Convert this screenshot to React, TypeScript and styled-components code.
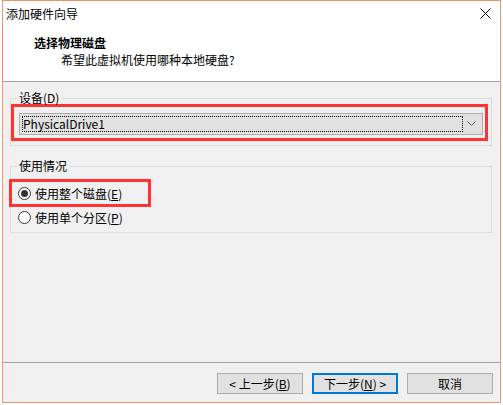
import React from 'react'
import styled, { createGlobalStyle } from 'styled-components'

const GlobalStyle = createGlobalStyle`
  html, body {
    margin: 0;
    padding: 0;
    background: #fff;
  }
  body {
    font-family: "Noto Sans CJK SC", "Microsoft YaHei", sans-serif;
    font-size: 12px;
    color: #000;
  }
`

const Window = styled.div`
  box-sizing: border-box;
  width: 499px;
  height: 403px;
  margin-left: 2px;
  border: 1px solid #f0956a;
  display: flex;
  flex-direction: column;
  background: #f0f0f0;
`

const TitleBar = styled.div`
  height: 25px;
  flex-shrink: 0;
  background: #fff;
  display: flex;
  align-items: center;
  justify-content: space-between;
  padding: 0 9px 0 3px;
`

const TitleText = styled.span`
  line-height: 17px;
`

const Header = styled.div`
  height: 55px;
  flex-shrink: 0;
  background: #fff;
  border-bottom: 1px solid #a0a0a0;
`

const HeaderTitle = styled.div`
  font-weight: bold;
  line-height: 17px;
  padding: 8px 0 0 31px;
`

const HeaderSub = styled.div`
  line-height: 17px;
  padding-left: 58px;
`

const Body = styled.div`
  flex: 1;
  padding: 10px 8px 0 7px;
`

const Group = styled.fieldset<{ $gap?: number }>`
  margin: ${p => p.$gap ?? 0}px 0 0 0;
  min-width: 0;
  border: 1px solid #dcdcdc;
  padding: 0 3px ${p => (p.$gap ? 5 : 4)}px 0;
`

const Legend = styled.legend`
  margin-left: 6px;
  padding: 0 2px;
  line-height: 12px;
`

const Highlight = styled.div<{ $pad: string; $offset?: number; $top?: number; $width?: number }>`
  box-sizing: border-box;
  border: 3px solid #f33;
  padding: ${p => p.$pad};
  margin: ${p => p.$top ?? 0}px 0 0 ${p => p.$offset ?? 0}px;
  width: ${p => (p.$width ? `${p.$width}px` : 'auto')};
`

const Combo = styled.div`
  box-sizing: border-box;
  height: 22px;
  border: 1px solid #adadad;
  background: #e1e1e1;
  display: flex;
  padding: 2px;
`

const ComboText = styled.div`
  flex: 1;
  display: flex;
  align-items: center;
  border: 1px dotted #000;
  line-height: 14px;
`

const ComboArrow = styled.div`
  width: 17px;
  display: flex;
  align-items: center;
  justify-content: center;
`

const RadioRow = styled.label<{ $indent?: number; $height: number }>`
  display: flex;
  align-items: center;
  gap: 4px;
  height: ${p => p.$height}px;
  padding-left: ${p => p.$indent ?? 0}px;
`

const Radio = styled.span<{ $checked?: boolean }>`
  box-sizing: border-box;
  width: 13px;
  height: 13px;
  border: 1px solid #333;
  border-radius: 50%;
  background: #fff;
  display: flex;
  align-items: center;
  justify-content: center;

  &::after {
    content: '';
    width: 7px;
    height: 7px;
    border-radius: 50%;
    background: #333;
    display: ${p => (p.$checked ? 'block' : 'none')};
  }
`

const Key = styled.span`
  text-decoration: underline;
`

const Footer = styled.div`
  box-sizing: border-box;
  height: 40px;
  flex-shrink: 0;
  border-top: 1px solid #a0a0a0;
  display: flex;
  justify-content: flex-end;
  gap: 9px;
  padding: 10px 7px 0 0;
`

const Button = styled.button<{ $default?: boolean }>`
  box-sizing: border-box;
  width: 86px;
  height: 21px;
  margin: 0;
  padding: 0;
  font: inherit;
  line-height: 17px;
  color: #000;
  background: #e1e1e1;
  border: ${p => (p.$default ? '2px solid #0078d7' : '1px solid #adadad')};
`

const CloseIcon = () => (
  <svg width="11" height="11" viewBox="0 0 11 11">
    <path d="M0.5 0.5 L10.5 10.5 M10.5 0.5 L0.5 10.5" stroke="#000" strokeWidth="1" />
  </svg>
)

const Chevron = () => (
  <svg width="9" height="6" viewBox="0 0 9 6">
    <polyline points="0.5,0.5 4.5,4.5 8.5,0.5" fill="none" stroke="#555" strokeWidth="1" />
  </svg>
)

export default function App() {
  return (
    <>
      <GlobalStyle />
      <Window>
        <TitleBar>
          <TitleText>添加硬件向导</TitleText>
          <CloseIcon />
        </TitleBar>
        <Header>
          <HeaderTitle>选择物理磁盘</HeaderTitle>
          <HeaderSub>希望此虚拟机使用哪种本地硬盘?</HeaderSub>
        </Header>
        <Body>
          <Group>
            <Legend>设备(D)</Legend>
            <Highlight $pad="6px 2px 3px 5px">
              <Combo>
                <ComboText>PhysicalDrive1</ComboText>
                <ComboArrow>
                  <Chevron />
                </ComboArrow>
              </Combo>
            </Highlight>
          </Group>
          <Group $gap={14}>
            <Legend>使用情况</Legend>
            <Highlight $pad="0 0 0 6px" $offset={-2} $top={7} $width={142}>
              <RadioRow $height={22}>
                <Radio $checked />
                <span>
                  使用整个磁盘(<Key>E</Key>)
                </span>
              </RadioRow>
            </Highlight>
            <RadioRow $height={20} $indent={7}>
              <Radio />
              <span>
                使用单个分区(<Key>P</Key>)
              </span>
            </RadioRow>
          </Group>
        </Body>
        <Footer>
          <Button>
            &lt; 上一步(<Key>B</Key>)
          </Button>
          <Button $default>
            下一步(<Key>N</Key>) &gt;
          </Button>
          <Button>取消</Button>
        </Footer>
      </Window>
    </>
  )
}
